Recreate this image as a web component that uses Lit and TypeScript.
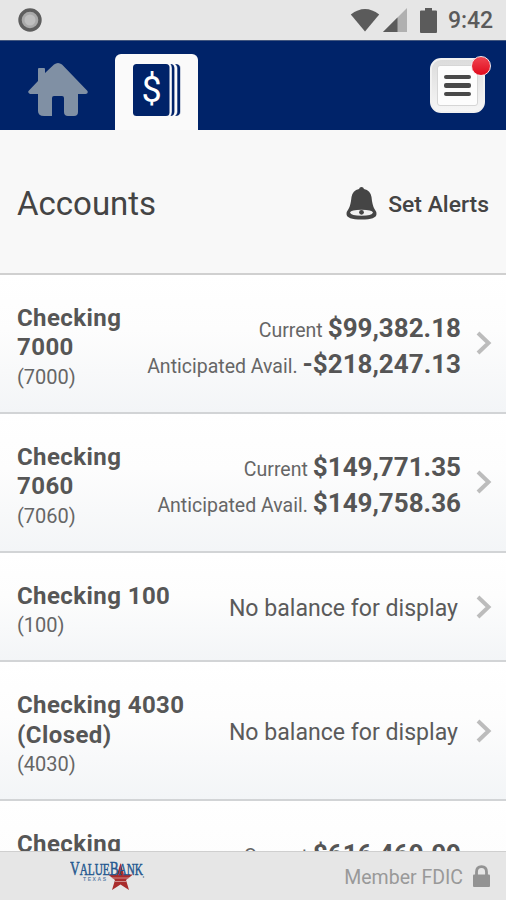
import { LitElement, html, css } from "lit";
import { customElement, property } from "lit/decorators.js";

interface Account {
  name: string[];
  id: string;
  current?: string;
  available?: string;
}

const ACCOUNTS: Account[] = [
  { name: ["Checking", "7000"], id: "7000", current: "$99,382.18", available: "-$218,247.13" },
  { name: ["Checking", "7060"], id: "7060", current: "$149,771.35", available: "$149,758.36" },
  { name: ["Checking 100"], id: "100" },
  { name: ["Checking 4030", "(Closed)"], id: "4030" },
  { name: ["Checking", "7010"], id: "7010", current: "$616,469.09", available: "$616,469.09" },
];

@customElement("status-bar")
class StatusBar extends LitElement {
  static styles = css`
    :host { display: flex; align-items: center; height: 40px; flex: none; background: #e6e6e6; color: #5b5b5b; padding: 0 12px 0 18px; }
    .dot { margin-right: auto; }
    .wifi { margin-right: 3px; }
    .signal { margin-right: 13px; }
    .battery { margin-right: 11px; }
    .time { font-size: 23px; font-weight: 500; line-height: 38px; width: 46px; white-space: nowrap; padding-top: 2px; letter-spacing: -0.1px; }
    svg { display: block; flex: none; }
  `;
  render() {
    return html`
      <svg class="dot" width="24" height="24" viewBox="0 0 24 24">
        <circle cx="12" cy="12" r="10" fill="#a9a9a9" stroke="#5e5e5e" stroke-width="3.4" />
        <circle cx="12" cy="12" r="5.5" fill="#bebebe" />
      </svg>
      <svg class="wifi" width="30" height="24" viewBox="0 0 30 24">
        <path d="M0.8 6.500 Q15 -4.500 29.200 6.500 L15 23.500Z" fill="#5b5b5b" />
      </svg>
      <svg class="signal" width="24" height="24" viewBox="0 0 24 24">
        <path d="M0 24 24 0V24Z" fill="#b0b0b0" /><path d="M0 24 14.500 9.500V24Z" fill="#5b5b5b" />
      </svg>
      <svg class="battery" width="17" height="25" viewBox="0 0 17 25">
        <path d="M5 0h7v2.500h4q1 0 1 1V24q0 1-1 1H1q-1 0-1-1V3.500q0-1 1-1h4z" fill="#5b5b5b" />
      </svg>
      <span class="time">9:42</span>
    `;
  }
}

@customElement("nav-header")
class NavHeader extends LitElement {
  static styles = css`
    :host { display: flex; height: 90px; flex: none; background: #002369; box-sizing: border-box; padding: 0 21px 0 28px; border-top: 1px solid #43577f; }
    svg { display: block; }
    .home { margin-top: 22px; width: 60px; }
    .tab { margin: 13px 0 0 27px; width: 83px; height: 76px; background: #fafafa; border-radius: 6px 6px 0 0; }
    .tab svg { margin: 10px 0 0 18px; }
    .dollar { font: 36px Roboto, sans-serif; fill: #fff; }
    .menu { margin: 17px 0 0 auto; width: 55px; height: 55px; box-sizing: border-box; border-radius: 11px; background: linear-gradient(#dcdcdc, #f6f6f6); border: 2px solid #f1f1f1; position: relative; display: flex; align-items: center; justify-content: center; }
    .face { width: 41px; height: 41px; box-sizing: border-box; border: 1px solid #d6d6d6; border-radius: 3px; background: #fdfdfd; display: flex; flex-direction: column; align-items: center; justify-content: center; gap: 4px; }
    .bar { width: 27px; height: 4.500px; border-radius: 2px; background: #4a4a4a; }
    .badge { position: absolute; top: -4px; right: -8px; width: 20px; height: 20px; box-sizing: border-box; border: 1.500px solid #f7e6e8; border-radius: 50%; background: linear-gradient(#f04450, #e00a1c); }
  `;
  render() {
    return html`
      <svg class="home" width="60" height="54" viewBox="0 0 60 54">
        <path d="M10 18V6q0-1 1-1h5q1 0 1 1v4l9-8.500q4-3 8 0L59.500 28q1 3-2 3H50V49q0 4-4 4H40q-4 0-4-4V35q0-2-2-2H26q-2 0-2 2V53H16Q10 53 10 48V31H2Q-.5 30 .5 28Z" fill="#8090a4" />
      </svg>
      <div class="tab">
        <svg width="48" height="52" viewBox="0 0 48 52">
          <rect width="36.500" height="52" rx="3.500" fill="#002369" />
          <path d="M37.800 0q3.400.5 3.400 4V48q0 3.500-3.400 4 1.200-2 1.200-4V4q0-2-1.200-4Z M42.500 0Q47 .5 47 4V48q0 3.500-4.500 4 2-2 2-4V4q0-2-2-4Z" fill="#002369" stroke="#002369" stroke-width=".4" />
          <text class="dollar" x="18.500" y="38" text-anchor="middle">$</text>
        </svg>
      </div>
      <div class="menu">
        <div class="face"><div class="bar"></div><div class="bar"></div><div class="bar"></div></div>
        <div class="badge"></div>
      </div>
    `;
  }
}

@customElement("page-title")
class PageTitle extends LitElement {
  static styles = css`
    :host { display: flex; align-items: center; height: 145px; flex: none; box-sizing: border-box; background: #f8f8f8; border-bottom: 2px solid #d0d0d0; padding: 4px 17px 0; color: #444; }
    .title { font-size: 33px; margin-right: auto; }
    .bell { display: block; margin-right: 11px; }
    .label { font-size: 22.900px; font-weight: 500; padding-top: 1px; }
  `;
  render() {
    return html`
      <span class="title">Accounts</span>
      <svg class="bell" width="31" height="33" viewBox="0 0 31 33">
        <path d="M15.500 0q2 0 2.500 2 6.500 1.500 7.500 8 .8 8.500 3 12 2 2.500 2 5Q30.500 32.500 15.500 32.500T.5 27Q.5 24.500 2.500 22 4.700 18.500 5.500 10 6.500 3.500 13 2q.5-2 2.500-2Z" fill="#454545" />
        <path d="M4 25.500Q5 22.800 15.500 22.800T27 25.500Q26 28.800 15.500 28.800T4 25.500Z" fill="#f0f0f0" />
        <circle cx="15.500" cy="25.300" r="2.400" fill="#454545" />
      </svg>
      <span class="label">Set Alerts</span>
    `;
  }
}

@customElement("account-row")
class AccountRow extends LitElement {
  @property({ attribute: false }) account!: Account;
  static styles = css`
    :host { display: flex; align-items: center; flex: none; box-sizing: border-box; background: linear-gradient(#fff, #fdfdfd 40%, #f3f5f7); border-bottom: 2px solid #d2d4d6; padding: 0 14px 0 17px; color: #565656; }
    .who { padding: 28.700px 0 21.100px; margin-right: auto; }
    .name { font-size: 24px; font-weight: 700; line-height: 29.600px; white-space: nowrap; letter-spacing: 0.420px; }
    .id { font-size: 20px; line-height: 28px; color: #666; }
    .balances { padding-top: 5px; text-align: right; margin-right: 15px; }
    .balance { height: 36px; line-height: 36px; white-space: nowrap; font-size: 20px; color: #666; }
    .label { font-size: 19.500px; }
    .amount { font-size: 26px; font-weight: 700; color: #555; }
    .none { padding-top: 4px; font-size: 23.100px; margin-right: 18px; color: #5a5a5a; }
    svg { display: block; }
  `;
  render() {
    const a = this.account;
    return html`
      <div class="who">
        ${a.name.map((line) => html`<div class="name">${line}</div>`)}
        <div class="id">(${a.id})</div>
      </div>
      ${a.current
        ? html`<div class="balances">
            <div class="balance"><span class="label">Current</span> <span class="amount">${a.current}</span></div>
            <div class="balance"><span class="label">Anticipated Avail.</span> <span class="amount">${a.available}</span></div>
          </div>`
        : html`<div class="none">No balance for display</div>`}
      <svg width="16" height="24" viewBox="0 0 16 24">
        <path d="M2 2 12.500 12 2 22" fill="none" stroke="#bcbcbc" stroke-width="4" />
      </svg>
    `;
  }
}

@customElement("bank-footer")
class BankFooter extends LitElement {
  static styles = css`
    :host { display: flex; align-items: center; flex: none; height: 49px; box-sizing: border-box; background: #e6e6e6; border-top: 1px solid #cfcfcf; padding: 0 16px 0 70px; }
    .brand { display: block; margin-right: auto; }
    .word { font: 400 19px "Liberation Serif", serif; fill: #25588f; stroke: #25588f; stroke-width: 0.5px; }
    .small { font-size: 16px; }
    .texas { font: 700 5px "Liberation Sans", sans-serif; fill: #6384a8; }
    .fdic { font-size: 19.500px; color: #999; margin-right: 10px; padding-top: 2px; }
    .lock { display: block; }
  `;
  render() {
    return html`
      <svg class="brand" width="76" height="32" viewBox="0 0 76 32">
        <path d="M50.500 3 54 14.500H63L56 20 59 30 50.500 24.500 42 30 45 20 38 14.500H47Z" fill="#a92c2c" />
        <path d="M42 18H59M45 21.500H56.500" stroke="#d8a5a5" stroke-width=".8" />
        <text class="word" x="0" y="15" textLength="73" lengthAdjust="spacingAndGlyphs">V<tspan class="small">ALUE</tspan>B<tspan class="small">ANK</tspan></text>
        <text class="texas" x="13" y="20.500" textLength="23">TEXAS</text>
        <circle cx="73.500" cy="17" r=".8" fill="#5b7a9c" />
      </svg>
      <span class="fdic">Member FDIC</span>
      <svg class="lock" width="17" height="22" viewBox="0 0 17 22">
        <path d="M3.500 10V7q0-5.300 5-5.300t5 5.300v3" fill="none" stroke="#939393" stroke-width="2.800" />
        <rect y="9.500" width="17" height="12.500" rx="1" fill="#939393" />
      </svg>
    `;
  }
}

@customElement("app-root")
class AppRoot extends LitElement {
  static styles = css`
    :host { display: flex; flex-direction: column; width: 506px; height: 900px; overflow: hidden; font-family: Roboto, sans-serif; background: #fff; }
    .list { flex: 1; min-height: 0; overflow: hidden; display: flex; flex-direction: column; }
  `;
  render() {
    return html`
      <status-bar></status-bar>
      <nav-header></nav-header>
      <page-title></page-title>
      <div class="list">${ACCOUNTS.map((a) => html`<account-row .account=${a}></account-row>`)}</div>
      <bank-footer></bank-footer>
    `;
  }
}
